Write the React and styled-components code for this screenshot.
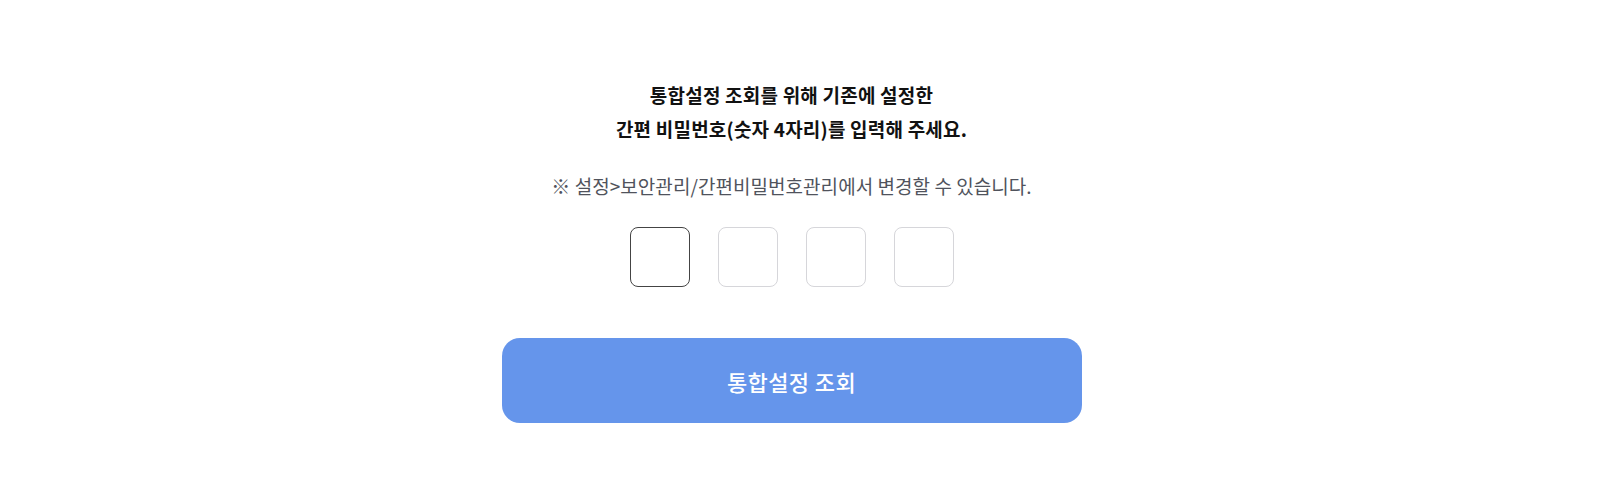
import styled, { createGlobalStyle } from 'styled-components';

const GlobalStyle = createGlobalStyle`
  html, body {
    margin: 0;
    padding: 0;
    background: #ffffff;
  }
  body {
    font-family: "Noto Sans CJK KR", "Noto Sans", sans-serif;
  }
`;

const PIN_LENGTH = 4;

function App() {
  return (
    <>
      <GlobalStyle />
      <Page>
        <Title>
          통합설정 조회를 위해 기존에 설정한
          <br />
          간편 비밀번호(숫자 4자리)를 입력해 주세요.
        </Title>
        <Notice>※ 설정&gt;보안관리/간편비밀번호관리에서 변경할 수 있습니다.</Notice>
        <PinRow>
          {Array.from({ length: PIN_LENGTH }).map((_, idx) => (
            <PinBox key={idx} active={idx === 0} />
          ))}
        </PinRow>
        <SubmitButton type="button">통합설정 조회</SubmitButton>
      </Page>
    </>
  );
}

export default App;

const Page = styled.main`
  width: 1583px;
  height: 497px;
  box-sizing: border-box;
  padding-top: 78px;

  display: flex;
  flex-direction: column;
  align-items: center;
`;

const Title = styled.h2`
  margin: 0;
  font-size: 19px;
  font-weight: 700;
  line-height: 34px;
  letter-spacing: 0.2px;
  color: #111111;
  text-align: center;
`;

const Notice = styled.p`
  margin: 27px 0 0;
  font-size: 19px;
  font-weight: 400;
  line-height: 26px;
  letter-spacing: 0.05px;
  color: #50535c;
  text-align: center;
`;

const PinRow = styled.div`
  margin-top: 28px;
  display: flex;
  gap: 28px;
`;

const PinBox = styled.div`
  width: 60px;
  height: 60px;
  box-sizing: border-box;
  border-radius: 8px;
  border: 1px solid ${(props) => (props.active ? '#444444' : '#d6d6da')};
  background: #ffffff;
`;

const SubmitButton = styled.button`
  margin-top: 51px;
  width: 580px;
  height: 85px;
  border: none;
  border-radius: 18px;
  background-color: #6595eb;
  color: #ffffff;

  font-family: "Noto Sans CJK KR", "Noto Sans", sans-serif;
  font-size: 22px;
  font-weight: 500;
  letter-spacing: 0.4px;
  cursor: pointer;
`;
